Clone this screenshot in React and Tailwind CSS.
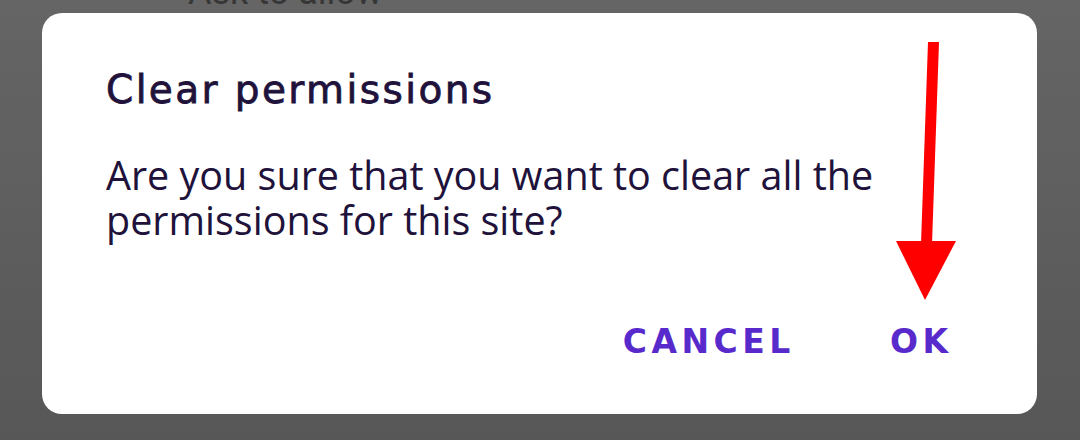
import React from 'react';

const Arrow = () => (
  <svg className="absolute left-0 top-0 pointer-events-none" width="1080" height="440" viewBox="0 0 1080 440">
    <polygon points="928,42 939,42 932,244 921,244" fill="#ff0000" />
    <polygon points="896,241 956,241 925,300" fill="#ff0000" />
  </svg>
);

const App = () => {
  return (
    <div className="relative w-[1080px] h-[440px] overflow-hidden bg-linear-to-b from-[#656565] to-[#575757]">
      {/* page behind the dim */}
      <div className="pl-[188px] -mt-[28px] text-[36px] leading-[40px] text-[#363636] font-['Roboto',sans-serif]">
        Ask to allow
      </div>

      {/* dialog */}
      <div className="absolute left-[42px] top-[13px] w-[995px] h-[401px] bg-white rounded-[20px] flex flex-col pl-[64px] pr-[89px]">
        <h2 className="mt-[54px] text-[39px] leading-[46px] font-normal tracking-[2.4px] text-[#20123a] [-webkit-text-stroke:0.8px_#20123a] font-['DejaVu_Sans',sans-serif]">
          Clear permissions
        </h2>
        <p className="mt-[40px] text-[39.5px] leading-[45px] text-[#20123a] font-['Open_Sans',sans-serif]">
          Are you sure that you want to clear all the permissions for this site?
        </p>
        <div className="mt-auto mb-[52px] flex justify-end items-center gap-[95px]">
          <button className="text-[33px] leading-[40px] font-bold tracking-[4.5px] text-[#592acb] font-['DejaVu_Sans',sans-serif]">
            CANCEL
          </button>
          <button className="text-[33px] leading-[40px] font-bold tracking-[4.5px] -mr-[4.5px] text-[#592acb] font-['DejaVu_Sans',sans-serif]">
            OK
          </button>
        </div>
      </div>

      <Arrow />
    </div>
  );
};

export default App;
